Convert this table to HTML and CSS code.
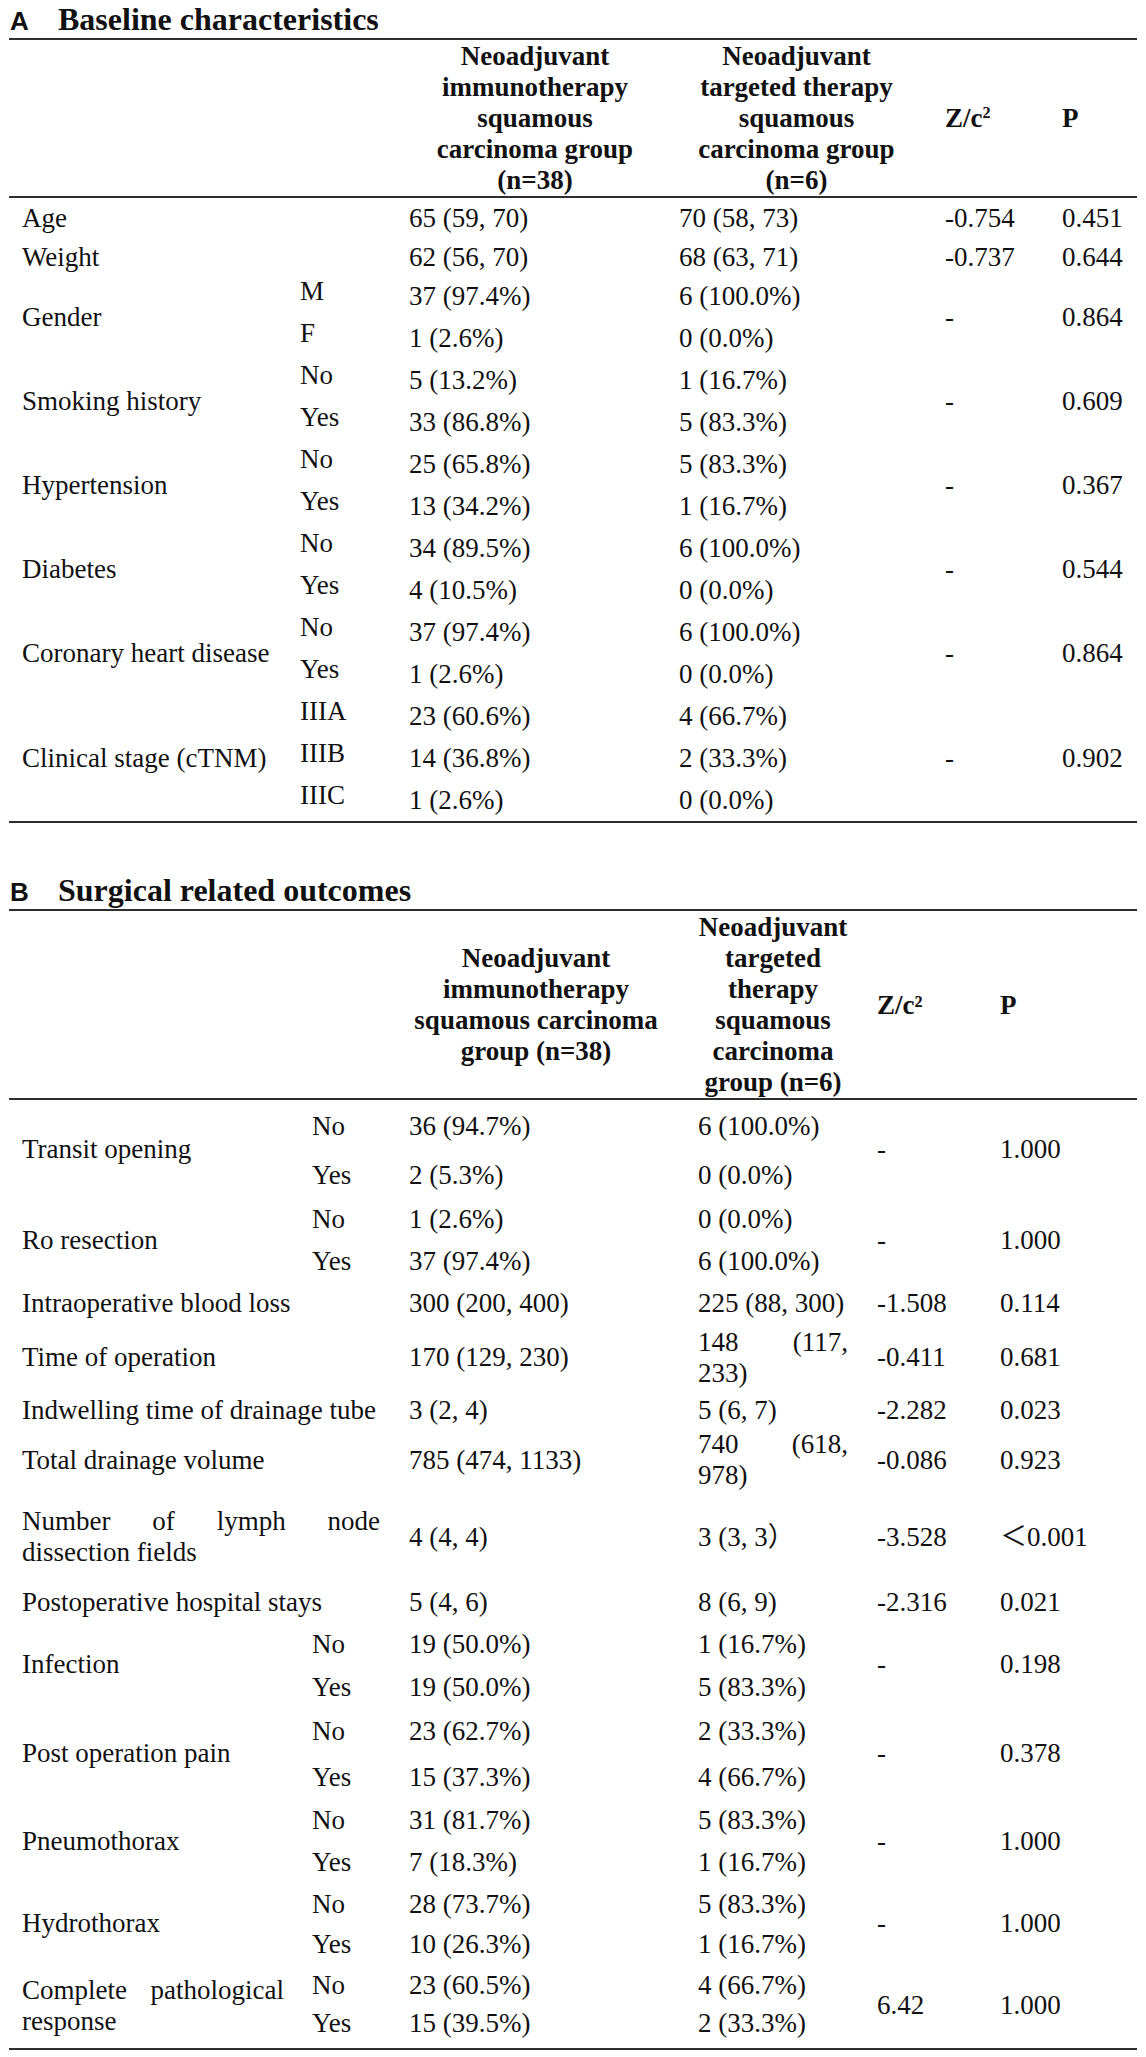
FILE: index.html
```html
<!DOCTYPE html>
<html lang="en">
<head>
<meta charset="utf-8">
<title>Baseline characteristics and surgical related outcomes</title>
<link rel="stylesheet" href="styles.css">
</head>
<body>
<div class="page">

<section class="panel">
  <h2 class="panel-title"><span class="panel-letter">A</span>Baseline characteristics</h2>
  <table class="tbl tbl-a">
    <colgroup>
      <col class="a1"><col class="a2"><col class="a3"><col class="a4"><col class="a5"><col class="a6">
    </colgroup>
    <thead>
      <tr>
        <th class="hn"></th><th class="hn"></th>
        <th class="ha3">Neoadjuvant<br>immunotherapy<br>squamous<br>carcinoma group<br>(n=38)</th>
        <th class="ha4">Neoadjuvant<br>targeted therapy<br>squamous<br>carcinoma group<br>(n=6)</th>
        <th class="hl ha5">Z/c<sup>2</sup></th>
        <th class="hl ha6">P</th>
      </tr>
    </thead>
    <tbody>
      <tr class="h41"><td colspan="2" class="lab">Age</td><td class="va3">65 (59, 70)</td><td class="va4">70 (58, 73)</td><td class="va5">-0.754</td><td class="va6">0.451</td></tr>
      <tr class="h36"><td colspan="2" class="lab">Weight</td><td class="va3">62 (56, 70)</td><td class="va4">68 (63, 71)</td><td class="va5">-0.737</td><td class="va6">0.644</td></tr>

      <tr class="h42"><td rowspan="2" class="lab">Gender</td><td class="sa">M</td><td class="va3">37 (97.4%)</td><td class="va4">6 (100.0%)</td><td rowspan="2" class="va5">-</td><td rowspan="2" class="va6">0.864</td></tr>
      <tr class="h42"><td class="sa">F</td><td class="va3">1 (2.6%)</td><td class="va4">0 (0.0%)</td></tr>

      <tr class="h42"><td rowspan="2" class="lab">Smoking history</td><td class="sa">No</td><td class="va3">5 (13.2%)</td><td class="va4">1 (16.7%)</td><td rowspan="2" class="va5">-</td><td rowspan="2" class="va6">0.609</td></tr>
      <tr class="h42"><td class="sa">Yes</td><td class="va3">33 (86.8%)</td><td class="va4">5 (83.3%)</td></tr>

      <tr class="h42"><td rowspan="2" class="lab">Hypertension</td><td class="sa">No</td><td class="va3">25 (65.8%)</td><td class="va4">5 (83.3%)</td><td rowspan="2" class="va5">-</td><td rowspan="2" class="va6">0.367</td></tr>
      <tr class="h42"><td class="sa">Yes</td><td class="va3">13 (34.2%)</td><td class="va4">1 (16.7%)</td></tr>

      <tr class="h42"><td rowspan="2" class="lab">Diabetes</td><td class="sa">No</td><td class="va3">34 (89.5%)</td><td class="va4">6 (100.0%)</td><td rowspan="2" class="va5">-</td><td rowspan="2" class="va6">0.544</td></tr>
      <tr class="h42"><td class="sa">Yes</td><td class="va3">4 (10.5%)</td><td class="va4">0 (0.0%)</td></tr>

      <tr class="h42"><td rowspan="2" class="lab">Coronary heart disease</td><td class="sa">No</td><td class="va3">37 (97.4%)</td><td class="va4">6 (100.0%)</td><td rowspan="2" class="va5">-</td><td rowspan="2" class="va6">0.864</td></tr>
      <tr class="h42"><td class="sa">Yes</td><td class="va3">1 (2.6%)</td><td class="va4">0 (0.0%)</td></tr>

      <tr class="h42"><td rowspan="3" class="lab">Clinical stage (cTNM)</td><td class="sa">IIIA</td><td class="va3">23 (60.6%)</td><td class="va4">4 (66.7%)</td><td rowspan="3" class="va5">-</td><td rowspan="3" class="va6">0.902</td></tr>
      <tr class="h42"><td class="sa">IIIB</td><td class="va3">14 (36.8%)</td><td class="va4">2 (33.3%)</td></tr>
      <tr class="h42"><td class="sa">IIIC</td><td class="va3">1 (2.6%)</td><td class="va4">0 (0.0%)</td></tr>
    </tbody>
  </table>
</section>

<section class="panel panel-b">
  <h2 class="panel-title"><span class="panel-letter">B</span>Surgical related outcomes</h2>
  <table class="tbl tbl-b">
    <colgroup>
      <col class="b1"><col class="b2"><col class="b3"><col class="b4"><col class="b5"><col class="b6">
    </colgroup>
    <thead>
      <tr>
        <th class="hn"></th><th class="hn"></th>
        <th class="hb3">Neoadjuvant<br>immunotherapy<br>squamous carcinoma<br>group (n=38)</th>
        <th class="hb4">Neoadjuvant<br>targeted<br>therapy<br>squamous<br>carcinoma<br>group (n=6)</th>
        <th class="hl hb5">Z/c²</th>
        <th class="hl hb6">P</th>
      </tr>
    </thead>
    <tbody>
      <tr class="h52"><td rowspan="2" class="lab lb">Transit opening</td><td class="sb">No</td><td class="vb3">36 (94.7%)</td><td class="vb4">6 (100.0%)</td><td rowspan="2" class="vb5">-</td><td rowspan="2" class="vb6">1.000</td></tr>
      <tr class="h47"><td class="sb">Yes</td><td class="vb3">2 (5.3%)</td><td class="vb4">0 (0.0%)</td></tr>

      <tr class="h41"><td rowspan="2" class="lab lb">Ro resection</td><td class="sb">No</td><td class="vb3">1 (2.6%)</td><td class="vb4">0 (0.0%)</td><td rowspan="2" class="vb5">-</td><td rowspan="2" class="vb6">1.000</td></tr>
      <tr class="h42"><td class="sb">Yes</td><td class="vb3">37 (97.4%)</td><td class="vb4">6 (100.0%)</td></tr>

      <tr class="h42"><td colspan="2" class="lab lw">Intraoperative blood loss</td><td class="vb3">300 (200, 400)</td><td class="vb4">225 (88, 300)</td><td class="vb5">-1.508</td><td class="vb6">0.114</td></tr>
      <tr class="h67"><td colspan="2" class="lab lw">Time of operation</td><td class="vb3">170 (129, 230)</td><td class="vb4">148 (117, 233)</td><td class="vb5">-0.411</td><td class="vb6">0.681</td></tr>
      <tr class="h38"><td colspan="2" class="lab lw">Indwelling time of drainage tube</td><td class="vb3">3 (2, 4)</td><td class="vb4">5 (6, 7)</td><td class="vb5">-2.282</td><td class="vb6">0.023</td></tr>
      <tr class="h62"><td colspan="2" class="lab lw">Total drainage volume</td><td class="vb3">785 (474, 1133)</td><td class="vb4">740 (618, 978)</td><td class="vb5">-0.086</td><td class="vb6">0.923</td></tr>
      <tr class="h92"><td colspan="2" class="lab lw">Number of lymph node dissection fields</td><td class="vb3">4 (4, 4)</td><td class="vb4">3 (3, 3）</td><td class="vb5">-3.528</td><td class="vb6">＜0.001</td></tr>
      <tr class="h38"><td colspan="2" class="lab lw">Postoperative hospital stays</td><td class="vb3">5 (4, 6)</td><td class="vb4">8 (6, 9)</td><td class="vb5">-2.316</td><td class="vb6">0.021</td></tr>

      <tr class="h46"><td rowspan="2" class="lab lb">Infection</td><td class="sb">No</td><td class="vb3">19 (50.0%)</td><td class="vb4">1 (16.7%)</td><td rowspan="2" class="vb5">-</td><td rowspan="2" class="vb6">0.198</td></tr>
      <tr class="h41"><td class="sb">Yes</td><td class="vb3">19 (50.0%)</td><td class="vb4">5 (83.3%)</td></tr>

      <tr class="h47"><td rowspan="2" class="lab lb">Post operation pain</td><td class="sb">No</td><td class="vb3">23 (62.7%)</td><td class="vb4">2 (33.3%)</td><td rowspan="2" class="vb5">-</td><td rowspan="2" class="vb6">0.378</td></tr>
      <tr class="h44"><td class="sb">Yes</td><td class="vb3">15 (37.3%)</td><td class="vb4">4 (66.7%)</td></tr>

      <tr class="h43"><td rowspan="2" class="lab lb">Pneumothorax</td><td class="sb">No</td><td class="vb3">31 (81.7%)</td><td class="vb4">5 (83.3%)</td><td rowspan="2" class="vb5">-</td><td rowspan="2" class="vb6">1.000</td></tr>
      <tr class="h41"><td class="sb">Yes</td><td class="vb3">7 (18.3%)</td><td class="vb4">1 (16.7%)</td></tr>

      <tr class="h42"><td rowspan="2" class="lab lb">Hydrothorax</td><td class="sb">No</td><td class="vb3">28 (73.7%)</td><td class="vb4">5 (83.3%)</td><td rowspan="2" class="vb5">-</td><td rowspan="2" class="vb6">1.000</td></tr>
      <tr class="h38"><td class="sb">Yes</td><td class="vb3">10 (26.3%)</td><td class="vb4">1 (16.7%)</td></tr>

      <tr class="h44"><td rowspan="2" class="lab lb">Complete pathological response</td><td class="sb">No</td><td class="vb3">23 (60.5%)</td><td class="vb4">4 (66.7%)</td><td rowspan="2" class="vb5">6.42</td><td rowspan="2" class="vb6">1.000</td></tr>
      <tr class="h41 lift"><td class="sb">Yes</td><td class="vb3">15 (39.5%)</td><td class="vb4">2 (33.3%)</td></tr>
    </tbody>
  </table>
</section>

</div>
</body>
</html>
```

FILE: styles.css
```css
html, body {
  margin: 0;
  padding: 0;
  background: #ffffff;
}

body {
  font-family: "Liberation Serif", "Times New Roman", "Noto Sans CJK SC", serif;
  color: #111111;
}

.page {
  width: 1146px;
}

/* ---------- panel titles ---------- */
.panel-title {
  margin: 0;
  height: 38px;
  line-height: 38px;
  padding-left: 10px;
  font-size: 32px;
  font-weight: bold;
  white-space: nowrap;
}

.panel-letter {
  display: inline-block;
  width: 48px;
  font-family: "Liberation Sans", Arial, sans-serif;
  font-size: 26px;
  font-weight: bold;
}

.panel-b {
  margin-top: 48px;
}

/* ---------- tables ---------- */
.tbl {
  margin-left: 9px;
  width: 1128px;
  table-layout: fixed;
  border-collapse: separate;
  border-spacing: 0;
  border-top: 2px solid #2e2e2e;
  border-bottom: 2px solid #2e2e2e;
  font-size: 27px;
  line-height: 31px;
}

.tbl th {
  padding: 1px 0 0 0;
  font-weight: bold;
  text-align: center;
  vertical-align: middle;
  border-bottom: 2px solid #2e2e2e;
}

.tbl th.hl {
  text-align: left;
}

.tbl td {
  padding: 0;
  vertical-align: middle;
  white-space: normal;
}

.tbl sup {
  font-size: 0.6em;
  line-height: 0;
  vertical-align: 0.55em;
}

/* column widths: table A */
.a1 { width: 287px; }
.a2 { width: 109px; }
.a3 { width: 269px; }
.a4 { width: 267px; }
.a5 { width: 117px; }
.a6 { width: 79px; }

/* column widths: table B */
.b1 { width: 296px; }
.b2 { width: 100px; }
.b3 { width: 289px; }
.b4 { width: 179px; }
.b5 { width: 123px; }
.b6 { width: 141px; }

/* header cells */
.ha3 { padding-left: 4px !important; padding-right: 13px !important; }
.ha4 { padding-left: 5px !important; padding-right: 27px !important; }
.ha5 { padding-left: 4px !important; }
.ha6 { padding-left: 4px !important; }

.hb3 { padding-left: 4px !important; padding-right: 31px !important; }
.hb4 { padding-left: 4px !important; padding-right: 25px !important; }
.hb5 { padding-left: 4px !important; }
.hb6 { padding-left: 4px !important; }

/* body cells */
.tbl td.lab { padding-left: 13px; }
.tbl td.lb { padding-right: 21px; text-align: justify; }
.tbl td.lw { padding-right: 25px; text-align: justify; }

.tbl td.sa { padding-left: 4px; padding-bottom: 10px; }
.tbl td.sb { padding-left: 7px; }

.tbl td.va3 { padding-left: 4px; }
.tbl td.va4 { padding-left: 5px; }
.tbl td.va5 { padding-left: 4px; }
.tbl td.va6 { padding-left: 4px; }

.tbl td.vb3 { padding-left: 4px; }
.tbl td.vb4 { padding-left: 4px; padding-right: 25px; text-align: justify; }
.tbl td.vb5 { padding-left: 4px; }
.tbl td.vb6 { padding-left: 4px; }

.tbl tr.lift td { padding-bottom: 8px; }

/* row heights */
.h36 { height: 36px; }
.h37 { height: 37px; }
.h38 { height: 38px; }
.h41 { height: 41px; }
.h42 { height: 42px; }
.h43 { height: 43px; }
.h44 { height: 44px; }
.h46 { height: 46px; }
.h47 { height: 47px; }
.h52 { height: 52px; }
.h62 { height: 62px; }
.h67 { height: 67px; }
.h92 { height: 92px; }
```
